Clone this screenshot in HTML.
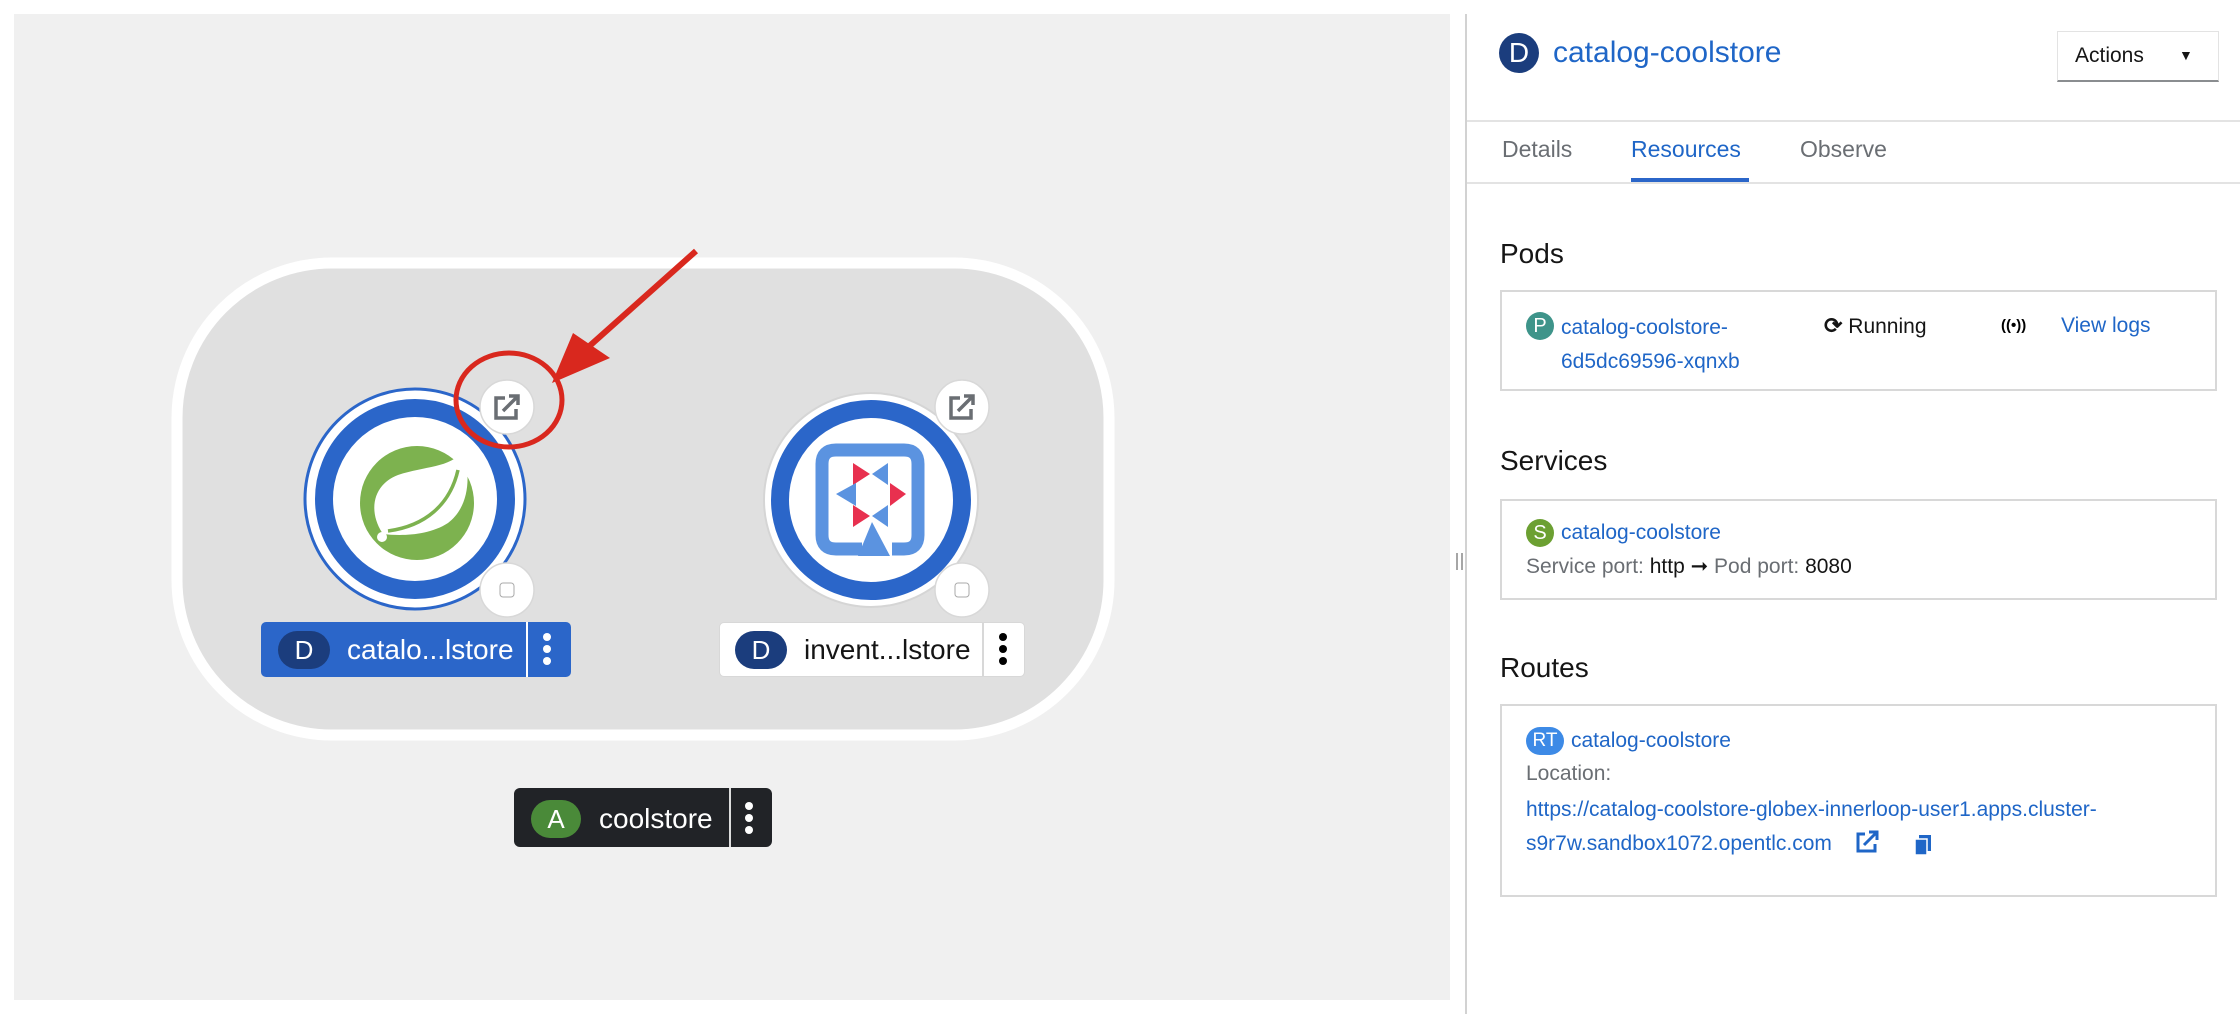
<!DOCTYPE html>
<html><head><meta charset="utf-8"><style>
*{margin:0;padding:0;box-sizing:border-box}
body{width:2240px;height:1014px;background:#fff;position:relative;overflow:hidden;font-family:"Liberation Sans",sans-serif}
.a{position:absolute}
.link{color:#1f66c7}
.h{font-size:28px;color:#151515;font-weight:500}
.box{position:absolute;border:2px solid #d8d8d8;background:#fff;left:1500px;width:717px}
.badge{position:absolute;border-radius:50%;color:#fff;text-align:center;font-size:20px}
.t{font-size:21px;white-space:nowrap}
</style></head><body>
<svg class="a" style="left:0;top:0" width="1467" height="1014">
<rect x="14" y="14" width="1436" height="986" fill="#f0f0f0"/>
<line x1="1466" y1="14" x2="1466" y2="1014" stroke="#d2d2d2" stroke-width="2"/>
<line x1="1457" y1="553" x2="1457" y2="570" stroke="#888" stroke-width="1.5"/>
<line x1="1462" y1="553" x2="1462" y2="570" stroke="#888" stroke-width="1.5"/>
<rect x="177" y="263" width="932" height="472" rx="155" fill="#e0e0e0" stroke="#fff" stroke-width="11"/>
<!-- catalog node -->
<circle cx="415" cy="499" r="110" fill="#fff" stroke="#2b66c9" stroke-width="3"/>
<circle cx="415" cy="499" r="91" fill="#fff" stroke="#2b66c9" stroke-width="18"/>
<circle cx="417" cy="503" r="57" fill="#7db24f"/>
<path d="M383 534 C368 512 372 485 398 475 C425 466 450 468 463 451 C472 478 468 508 448 523 C428 536 400 536 383 534 Z" fill="#fff"/>
<path d="M388 531 C425 526 450 505 458 470" fill="none" stroke="#7db24f" stroke-width="3.5"/>
<circle cx="382" cy="537" r="5" fill="#fff"/>
<!-- inventory node -->
<circle cx="871" cy="500" r="107" fill="#fff" stroke="#d5d5d5" stroke-width="2"/>
<circle cx="871" cy="500" r="91" fill="#fff" stroke="#2b66c9" stroke-width="18"/>
<path d="M862 549 H836 Q822 549 822 535 V464 Q822 450 836 450 H904 Q918 450 918 464 V535 Q918 549 904 549 H892" fill="none" stroke="#5b93e0" stroke-width="13"/>
<path d="M858 556 L872 522 L890 556 Z" fill="#5b93e0"/>
<path d="M853 463 L870 474 L853 485Z" fill="#e8304f"/>
<path d="M888 463 L888 485 L872 474Z" fill="#5b93e0"/>
<path d="M836 494 L856 483 L856 506Z" fill="#5b93e0"/>
<path d="M890 483 L906 494 L890 506Z" fill="#e8304f"/>
<path d="M853 505 L870 516 L853 527Z" fill="#e8304f"/>
<path d="M888 505 L888 527 L872 516Z" fill="#5b93e0"/>
<!-- badges -->
<g fill="#fff" stroke="#d8d8d8" stroke-width="1.5">
<circle cx="507" cy="407" r="27"/><circle cx="962" cy="407" r="27"/>
<circle cx="507" cy="590" r="27"/><circle cx="962" cy="590" r="27"/></g>
<g fill="none" stroke="#6a6e73" stroke-width="3.5">
<path d="M505 398 H496 V418 H516 V409"/><path d="M503 411 L518 396 M509 396 H518 V405"/>
<path d="M960 398 H951 V418 H971 V409"/><path d="M958 411 L973 396 M964 396 H973 V405"/></g>
<rect x="500" y="583" width="14" height="14" rx="3" fill="#fff" stroke="#aaa"/>
<rect x="955" y="583" width="14" height="14" rx="3" fill="#fff" stroke="#aaa"/>
<!-- red annotation -->
<ellipse cx="509" cy="400" rx="53" ry="47" fill="none" stroke="#d9281e" stroke-width="5"/>
<line x1="696" y1="251" x2="585" y2="350" stroke="#d9281e" stroke-width="6"/>
<path d="M552 383 L573 333 L610 358 Z" fill="#d9281e"/>
</svg>
<!-- labels -->
<div class="a" style="left:261px;top:622px;width:310px;height:55px;background:#2b66c9;border-radius:5px"></div>
<div class="a" style="left:278px;top:631px;width:52px;height:38px;border-radius:19px;background:#1b3d7d;color:#fff;font-size:26px;text-align:center;line-height:38px">D</div>
<div class="a" style="left:347px;top:633px;color:#fff;font-size:28px;line-height:34px">catalo...lstore</div>
<div class="a" style="left:526px;top:622px;width:2px;height:55px;background:#fff"></div>
<div class="a" style="left:719px;top:622px;width:306px;height:55px;background:#fff;border:1.5px solid #d8d8d8;border-radius:5px"></div>
<div class="a" style="left:735px;top:631px;width:52px;height:38px;border-radius:19px;background:#1b3d7d;color:#fff;font-size:26px;text-align:center;line-height:38px">D</div>
<div class="a" style="left:804px;top:633px;color:#151515;font-size:28px;line-height:34px">invent...lstore</div>
<div class="a" style="left:982px;top:622px;width:2px;height:55px;background:#d8d8d8"></div>
<div class="a" style="left:514px;top:788px;width:258px;height:59px;background:#212327;border-radius:6px"></div>
<div class="a" style="left:531px;top:800px;width:50px;height:38px;border-radius:19px;background:#4a8a39;color:#fff;font-size:26px;text-align:center;line-height:38px">A</div>
<div class="a" style="left:599px;top:802px;color:#fff;font-size:28px;line-height:34px">coolstore</div>
<div class="a" style="left:729px;top:788px;width:2px;height:59px;background:#ddd"></div>
<svg class="a" style="left:0;top:0" width="1100" height="900">
<g fill="#fff"><circle cx="547" cy="637" r="4"/><circle cx="547" cy="649" r="4"/><circle cx="547" cy="661" r="4"/>
<circle cx="749" cy="806" r="4"/><circle cx="749" cy="818" r="4"/><circle cx="749" cy="830" r="4"/></g>
<g fill="#000"><circle cx="1003" cy="637" r="4"/><circle cx="1003" cy="649" r="4"/><circle cx="1003" cy="661" r="4"/></g>
</svg>
<!-- right panel -->
<div class="badge" style="left:1499px;top:33px;width:40px;height:40px;line-height:40px;background:#1b3d7d;font-size:28px">D</div>
<div class="a link" style="left:1553px;top:33px;font-size:30px;line-height:40px;font-weight:500">catalog-coolstore</div>
<div class="a" style="left:2057px;top:31px;width:162px;height:51px;border:1px solid #e3e3e3;border-bottom:2px solid #8a8d90;font-size:21px;line-height:48px;padding-left:17px;color:#151515">Actions<span style="position:absolute;left:121px;top:-1px;font-size:14px">▼</span></div>
<div class="a" style="left:1467px;top:120px;width:773px;height:2px;background:#e3e3e3"></div>
<div class="a" style="left:1467px;top:182px;width:773px;height:2px;background:#e3e3e3"></div>
<div class="a t" style="left:1502px;top:136px;font-size:23px;color:#6a6e73">Details</div>
<div class="a t link" style="left:1631px;top:136px;font-size:23px">Resources</div>
<div class="a t" style="left:1800px;top:136px;font-size:23px;color:#6a6e73">Observe</div>
<div class="a" style="left:1631px;top:178px;width:118px;height:4px;background:#2b66c9"></div>
<div class="a h" style="left:1500px;top:238px">Pods</div>
<div class="box" style="top:290px;height:101px"></div>
<div class="badge" style="left:1526px;top:312px;width:28px;height:28px;line-height:28px;background:#3e948a">P</div>
<div class="a t link" style="left:1561px;top:311px;line-height:34px">catalog-coolstore-<br>6d5dc69596-xqnxb</div>
<div class="a t" style="left:1824px;top:313px;color:#151515;line-height:26px"><b style="font-size:22px">⟳</b> Running</div>
<div class="a t" style="left:2001px;top:313px;font-size:15px;line-height:26px;font-weight:bold">((•))</div>
<div class="a t link" style="left:2061px;top:313px;line-height:26px">View logs</div>
<div class="a h" style="left:1500px;top:445px">Services</div>
<div class="box" style="top:499px;height:101px"></div>
<div class="badge" style="left:1526px;top:519px;width:28px;height:28px;line-height:28px;background:#6ca032">S</div>
<div class="a t link" style="left:1561px;top:520px;line-height:26px">catalog-coolstore</div>
<div class="a t" style="left:1526px;top:554px;color:#6a6e73;line-height:26px">Service port: <span style="color:#151515">http ➞</span> Pod port: <span style="color:#151515">8080</span></div>
<div class="a h" style="left:1500px;top:652px">Routes</div>
<div class="box" style="top:704px;height:193px"></div>
<div class="badge" style="left:1526px;top:727px;width:38px;height:28px;line-height:28px;background:#3d8ae6;border-radius:14px;font-size:19px">RT</div>
<div class="a t link" style="left:1571px;top:728px;line-height:26px">catalog-coolstore</div>
<div class="a t" style="left:1526px;top:761px;color:#6a6e73;line-height:26px">Location:</div>
<div class="a t link" style="left:1526px;top:793px;line-height:34px">https://catalog-coolstore-globex-innerloop-user1.apps.cluster-<br>s9r7w.sandbox1072.opentlc.com</div>
<svg class="a" style="left:1855px;top:830px" width="90" height="26">
<g fill="none" stroke="#1f66c7" stroke-width="3"><path d="M10 4 H3 V21 H20 V14"/><path d="M9 15 L22 2 M14 2 H22 V10"/></g>
<rect x="64" y="5" width="12" height="16" fill="#1f66c7"/><rect x="60" y="9" width="12" height="16" fill="#1f66c7" stroke="#fff" stroke-width="1.5"/>
</svg>
</body></html>
